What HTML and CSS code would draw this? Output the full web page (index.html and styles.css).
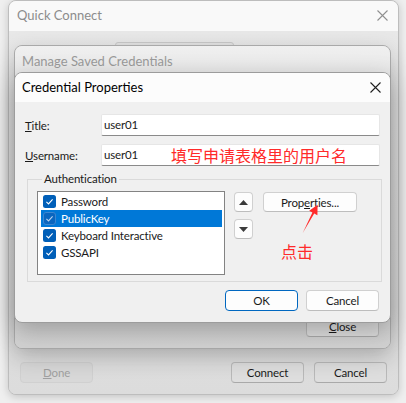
FILE: index.html
```html
<!DOCTYPE html>
<html>
<head>
<meta charset="utf-8">
<link rel="stylesheet" href="styles.css">
</head>
<body>
<div class="desk">
  <div class="win outer">
    <div class="titlebar outer-title">
      <span class="title-text dim">Quick Connect</span>
      <svg class="xicon" width="11" height="11" viewBox="0 0 11 11"><path d="M0.5 0.5L10.5 10.5M10.5 0.5L0.5 10.5" stroke="#8f8f8f" stroke-width="1.1" fill="none"/></svg>
    </div>
    <div class="outer-body">
      <div class="peek-box"></div>
      <div class="outer-check"><span class="plain-cb"></span><span class="check-label">Open in a tab</span></div>
      <div class="btn-row outer-btns">
        <button class="btn disabled"><u>D</u>one</button>
        <span class="spacer"></span>
        <button class="btn dimbtn">Connect</button>
        <button class="btn dimbtn">Cancel</button>
      </div>
    </div>
  </div>

  <div class="win manage">
    <div class="titlebar manage-title">
      <span class="title-text mtitle">Manage Saved Credentials</span>
    </div>
    <div class="manage-body">
      <button class="btn dimbtn"><u>C</u>lose</button>
    </div>
  </div>

  <div class="win cred">
    <div class="titlebar cred-title">
      <span class="title-text">Credential Properties</span>
      <svg class="xicon" width="11" height="11" viewBox="0 0 11 11"><path d="M0.5 0.5L10.5 10.5M10.5 0.5L0.5 10.5" stroke="#1f1f1f" stroke-width="1.1" fill="none"/></svg>
    </div>
    <div class="cred-body">
      <div class="form-row">
        <label class="lbl"><u>T</u>itle:</label>
        <div class="input">user01</div>
      </div>
      <div class="form-row second">
        <label class="lbl"><u>U</u>sername:</label>
        <div class="input">user01</div>
      </div>
      <fieldset class="group">
        <legend>Authentication</legend>
        <div class="group-inner">
          <div class="listbox">
            <div class="item"><span class="cb"><svg width="13" height="13" viewBox="0 0 13 13"><rect x="0" y="0" width="13" height="13" rx="2.5" fill="#005fb8"/><path d="M3.4 6.9L5.5 8.9L9.6 4.4" stroke="#fff" stroke-width="1.1" fill="none"/></svg></span>Password</div>
            <div class="item selected"><span class="cb"><svg width="13" height="13" viewBox="0 0 13 13"><rect x="0.5" y="0.5" width="12" height="12" rx="2.5" fill="#0a66bf" stroke="#3d86d0"/><path d="M3.4 6.9L5.5 8.9L9.6 4.4" stroke="#b9d3ee" stroke-width="1.1" fill="none"/></svg></span>PublicKey</div>
            <div class="item"><span class="cb"><svg width="13" height="13" viewBox="0 0 13 13"><rect x="0" y="0" width="13" height="13" rx="2.5" fill="#005fb8"/><path d="M3.4 6.9L5.5 8.9L9.6 4.4" stroke="#fff" stroke-width="1.1" fill="none"/></svg></span>Keyboard Interactive</div>
            <div class="item"><span class="cb"><svg width="13" height="13" viewBox="0 0 13 13"><rect x="0" y="0" width="13" height="13" rx="2.5" fill="#005fb8"/><path d="M3.4 6.9L5.5 8.9L9.6 4.4" stroke="#fff" stroke-width="1.1" fill="none"/></svg></span>GSSAPI</div>
          </div>
          <div class="arrows">
            <button class="btn sq"><svg width="9" height="5" viewBox="0 0 9 5"><path d="M0 5L4.5 0L9 5Z" fill="#3a3a3a"/></svg></button>
            <button class="btn sq"><svg width="9" height="5" viewBox="0 0 9 5"><path d="M0 0L4.5 5L9 0Z" fill="#3a3a3a"/></svg></button>
          </div>
          <button class="btn props">Prop<u>e</u>rties...</button>
        </div>
      </fieldset>
      <div class="btn-row cred-btns">
        <span class="spacer"></span>
        <button class="btn default">OK</button>
        <button class="btn">Cancel</button>
      </div>
    </div>
  </div>

  <div class="note note-user">填写申请表格里的用户名</div>
  <div class="note note-click">点击</div>
  <svg class="arrow" width="406" height="403" viewBox="0 0 406 403">
    <path d="M317.6 204.8L309.2 210.8L312.4 212.5L302.7 233L314.2 213.4L317.4 215.2Z" fill="#ff2a2a"/>
  </svg>
</div>
</body>
</html>
```

FILE: styles.css
```css
* { box-sizing: border-box; }
html, body { margin: 0; padding: 0; }
body {
  width: 406px;
  height: 403px;
  overflow: hidden;
  background: #efefef;
  font-family: Lato, "Liberation Sans", sans-serif;
  font-size: 11.5px;
  letter-spacing: -0.15px;
  color: #1a1a1a;
}
.desk { position: relative; width: 406px; height: 403px; }

.win {
  position: absolute;
  border-radius: 8px;
  display: flex;
  flex-direction: column;
  overflow: hidden;
}
.titlebar {
  display: flex;
  align-items: center;
  justify-content: space-between;
  flex: none;
}
.title-text { font-size: 13px; letter-spacing: 0; }
.dim { color: #8c8c8c; }

/* Quick Connect window */
.outer {
  left: 8px;
  top: 0;
  width: 391px;
  height: 395px;
  border: 1px solid #bdbdbd;
  background: #e5e5e5;
  box-shadow: 0 2px 8px rgba(0,0,0,0.18);
}
.outer-title {
  height: 30px;
  background: #f9f9f9;
  padding: 0 10px 2px 8px;
}
.outer-body {
  flex: 1;
  display: flex;
  flex-direction: column;
  padding: 11px 11px 11px 11px;
  background: linear-gradient(#e8e8e8, #dcdcdc);
}
.peek-box {
  margin-left: 95px;
  width: 119px;
  height: 20px;
  border: 1px solid #c9c9c9;
  border-radius: 3px;
  background: #e2e2e2;
}
.outer-check {
  margin-top: auto;
  margin-left: 207px;
  margin-bottom: 13px;
  display: flex;
  align-items: center;
  gap: 6px;
  height: 13px;
  color: #222;
}
.plain-cb {
  width: 12px;
  height: 12px;
  border: 1px solid #555;
  border-radius: 3px;
}
.btn-row { display: flex; align-items: center; }
.spacer { flex: 1; }
.outer-btns { gap: 10px; }

/* Manage window */
.manage {
  left: 14px;
  top: 45px;
  width: 377px;
  height: 304px;
  border: 1px solid #a9a9a9;
  background: #d6d6d6;
  box-shadow: 0 8px 22px rgba(0,0,0,0.22);
}
.manage-title {
  height: 31px;
  background: linear-gradient(#f0f0f0, #e6e6e6);
  padding: 0 0 2px 7px;
}
.mtitle { color: #9a9a9a; }
.manage-body {
  flex: 1;
  display: flex;
  align-items: flex-end;
  justify-content: flex-end;
  padding: 0 11px 11px 0;
  background: linear-gradient(#dedede, #d2d2d2);
}

/* Credential Properties window */
.cred {
  left: 14px;
  top: 72px;
  width: 377px;
  height: 251px;
  border: 1px solid #9c9c9c;
  background: #f0f0f0;
  box-shadow: 0 8px 24px rgba(0,0,0,0.26);
}
.cred-title {
  height: 29px;
  background: #fcfcfc;
  padding: 0 9px 1px 7px;
  color: #000;
}
.cred-body {
  flex: 1;
  padding: 12px 10px 11px 9px;
  display: flex;
  flex-direction: column;
}
.form-row {
  display: flex;
  align-items: center;
  height: 22px;
}
.form-row.second { margin-top: 8px; }
.lbl { width: 77px; padding-left: 1px; }
.input {
  width: 279px;
  height: 22px;
  background: #fff;
  border: 1px solid #e6e6e6;
  border-bottom: 1px solid #8a8a8a;
  border-radius: 2px;
  padding: 2px 0 0 2px;
  line-height: 16px;
}

.group {
  margin: 5px 0 0 3px;
  width: 355px;
  padding: 4px 0 6px 9px;
  border: 1px solid #dadada;
  min-width: 0;
}
.group legend {
  margin-left: 5px;
  padding: 0 2px;
  line-height: 16px;
}
.group-inner {
  display: flex;
  align-items: flex-start;
}
.listbox {
  width: 188px;
  height: 84px;
  background: #fff;
  border: 1px solid #838383;
  padding: 1px 2px 0 3px;
}
.item {
  height: 17px;
  display: flex;
  align-items: center;
  padding-left: 2px;
}
.item.selected { background: #0078d7; color: #fff; }
.cb { width: 13px; height: 13px; margin-right: 5px; display: flex; }

.arrows {
  margin-left: 9px;
  margin-top: 1px;
  display: flex;
  flex-direction: column;
  gap: 7px;
}
.btn {
  font-family: inherit;
  font-size: 11.5px;
  letter-spacing: -0.15px;
  color: #1a1a1a;
  background: #fdfdfd;
  border: 1px solid #d0d0d0;
  border-bottom-color: #bdbdbd;
  border-radius: 4px;
  width: 73px;
  height: 21px;
  padding: 0;
  display: flex;
  align-items: center;
  justify-content: center;
}
.btn.sq { width: 19px; height: 20px; }
.btn.props { width: 94px; height: 20px; margin-left: 10px; margin-top: 1px; }
.btn.default { border: 1px solid #0067c0; }
.cred-btns { margin-top: 8px; gap: 8px; margin-right: 1px; }
.dimbtn { background: #dedede; border-color: #b9b9b9; border-bottom-color: #a9a9a9; }
.disabled { background: #d8d8d8; border-color: #d0d0d0; color: #a0a0a0; }

.note {
  position: absolute;
  font-family: "Noto Sans CJK SC", sans-serif;
  font-size: 16px;
  line-height: 16px;
  letter-spacing: 0;
  color: #ff2a2a;
}
.note-user { left: 171px; top: 147px; }
.note-click { left: 281px; top: 243px; }
.arrow { position: absolute; left: 0; top: 0; pointer-events: none; }
```
